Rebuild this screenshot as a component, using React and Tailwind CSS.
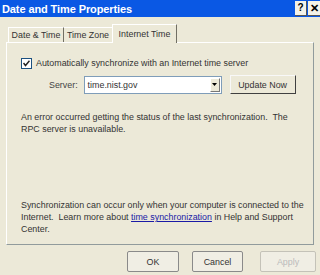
export default function App() {
  const font = { fontFamily: '"Liberation Sans", Arial, sans-serif' };
  return (
    <div className="w-[320px] h-[275px] bg-[#ece9d8] overflow-hidden flex flex-col text-[8.9px] text-black leading-[12px] whitespace-nowrap" style={font}>
      <div className="h-[17px] bg-[#0a58e4] flex items-center justify-between shrink-0">
        <span className="pl-[2px] text-white font-bold text-[11px] tracking-[-0.1px]">Date and Time Properties</span>
        <div className="flex gap-[1px] items-start h-full pt-[1px]">
          <div className="w-[12px] h-[15px] bg-[#f4f2e8] border-r border-b border-[#555] flex items-center justify-center text-[10px] font-bold text-black leading-none">?</div>
          <div className="w-[12px] h-[15px] bg-[#f4f2e8] border-b border-[#555] flex items-center justify-center text-[11px] font-bold text-black leading-none">✕</div>
        </div>
      </div>
      <div className="flex items-end h-[25px] pl-[8px] shrink-0">
        <div className="h-[15px] w-[56px] border-t border-l border-white border-r border-r-[#716f64] flex items-center justify-center text-[#333]">Date &amp; Time</div>
        <div className="h-[15px] w-[49px] border-t border-white border-r border-r-[#716f64] flex items-center justify-center text-[#333]">Time Zone</div>
        <div className="h-[19px] w-[65px] border-t border-l border-white border-r border-r-[#716f64] flex items-start justify-center pt-[3px] text-[#333] bg-[#ece9d8] relative top-[1px] -ml-[1px]">Internet Time</div>
      </div>
      <div className="mx-[6px] h-[203px] border-t border-l border-white border-r border-b border-r-[#919b9c] border-b-[#919b9c] flex flex-col px-[14px] pt-[14px] shrink-0">
        <div className="flex items-center gap-[4px]">
          <div className="w-[11px] h-[11px] bg-white border border-[#1c5180] flex items-center justify-center">
            <svg width="7" height="7" viewBox="0 0 7 7"><path d="M0.5 3 L2.5 5.5 L6.5 0.8" stroke="#222" strokeWidth="1.5" fill="none" /></svg>
          </div>
          <span className="text-[#333]">Automatically synchronize with an Internet time server</span>
        </div>
        <div className="flex items-center mt-[6px] pl-[28px]">
          <span className="text-[#444] mr-[6px]">Server:</span>
          <div className="w-[138px] h-[18px] bg-white border border-[#7f9db9] flex items-center justify-between">
            <span className="pl-[3px] text-[#333]">time.nist.gov</span>
            <div className="w-[10px] h-[14px] mr-[1px] border border-t-[#fff] border-l-[#fff] border-r-[#777] border-b-[#777] bg-[#ece9d8] flex items-center justify-center">
              <svg width="5" height="3" viewBox="0 0 5 3"><path d="M0 0 H5 L2.5 3 Z" fill="#000" /></svg>
            </div>
          </div>
          <div className="ml-[8px] w-[66px] h-[19px] border border-t-[#f8f8f8] border-l-[#f8f8f8] border-r-[#404040] border-b-[#404040] bg-[#ece9d8] flex items-center justify-center text-[#333]">Update Now</div>
        </div>
        <div className="mt-[17px] text-[#333]">
          <div>An error occurred getting the status of the last synchronization.&nbsp; The</div>
          <div>RPC server is unavailable.</div>
        </div>
        <div className="mt-auto mb-[9px] text-[#333]">
          <div>Synchronization can occur only when your computer is connected to the</div>
          <div>Internet.&nbsp; Learn more about <span className="text-[#1a1aa6] underline">time synchronization</span> in Help and Support</div>
          <div>Center.</div>
        </div>
      </div>
      <div className="flex justify-end pr-[4px] mt-[6px]">
        <div className="w-[52px] h-[21px] border border-[#8a8a8a] rounded-[2px] bg-[#f0eee4] flex items-center justify-center text-[#333]">OK</div>
        <div className="ml-[13px] w-[51px] h-[21px] border border-[#8a8a8a] rounded-[2px] bg-[#f0eee4] flex items-center justify-center text-[#333]">Cancel</div>
        <div className="ml-[17px] w-[56px] h-[21px] border border-[#c4c2b8] rounded-[2px] bg-[#f0eee4] flex items-center justify-center text-[#bbb]">Apply</div>
      </div>
    </div>
  );
}
